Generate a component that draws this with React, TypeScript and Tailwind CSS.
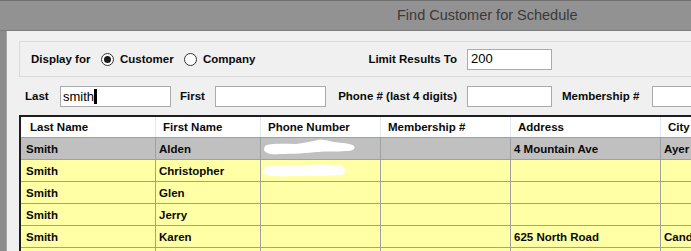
import React from 'react';

type Row = {
  last: string;
  first: string;
  phone: 0 | 1 | 2;
  membership: string;
  address: string;
  city: string;
  selected?: boolean;
};

const rows: Row[] = [
  { last: 'Smith', first: 'Alden', phone: 1, membership: '', address: '4 Mountain Ave', city: 'Ayer', selected: true },
  { last: 'Smith', first: 'Christopher', phone: 2, membership: '', address: '', city: '' },
  { last: 'Smith', first: 'Glen', phone: 0, membership: '', address: '', city: '' },
  { last: 'Smith', first: 'Jerry', phone: 0, membership: '', address: '', city: '' },
  { last: 'Smith', first: 'Karen', phone: 0, membership: '', address: '625 North Road', city: 'Cand' },
  { last: '', first: '', phone: 0, membership: '', address: '', city: '' },
];

const Radio = ({ checked }: { checked?: boolean }) => (
  <span className="w-[13px] h-[13px] rounded-full border border-[#333333] bg-white flex items-center justify-center shrink-0">
    {checked && <span className="w-[7px] h-[7px] rounded-full bg-[#1a1a1a]" />}
  </span>
);

const Redacted = ({ kind }: { kind: 1 | 2 }) =>
  kind === 1 ? (
    <svg width="96" height="20" viewBox="0 0 96 20" className="absolute left-[1px] top-0">
      <path
        d="M3 8 C8 5 22 6 34 6 C44 5 50 3 56 2 C62 1 66 3 72 4 C80 5 88 5 92 8 C94 11 90 13 84 13 C74 14 64 13 56 14 C46 15 30 16 18 16 C8 17 2 15 2 11 Z"
        fill="#ffffff"
      />
    </svg>
  ) : (
    <svg width="86" height="16" viewBox="0 0 86 16" className="absolute left-[1px] top-[3px]">
      <path
        d="M3 4 C12 2 30 2 46 2 C60 1 72 2 80 3 C84 5 84 10 80 12 C66 13 48 13 30 13 C16 14 6 13 2 11 C0 8 1 5 3 4 Z"
        fill="#ffffff"
      />
    </svg>
  );

const cols = [
  { label: 'Last Name', w: 'w-[135px]', hp: 'pl-[9px]', bp: 'pl-[5px]' },
  { label: 'First Name', w: 'w-[105px]', hp: 'pl-[7px]', bp: 'pl-[3px]' },
  { label: 'Phone Number', w: 'w-[120px]', hp: 'pl-[7px]', bp: 'pl-[3px]' },
  { label: 'Membership #', w: 'w-[130px]', hp: 'pl-[7px]', bp: 'pl-[3px]' },
  { label: 'Address', w: 'w-[150px]', hp: 'pl-[7px]', bp: 'pl-[3px]' },
  { label: 'City', w: 'w-[100px]', hp: 'pl-[7px]', bp: 'pl-[3px]' },
];

export default function App() {
  return (
    <div
      className="w-[691px] h-[251px] overflow-hidden bg-[#8c8c8c] flex flex-col text-[#0a0a0a]"
      style={{ fontFamily: '"Liberation Sans", Arial, sans-serif' }}
    >
      {/* title bar */}
      <div className="h-[31px] shrink-0 bg-[#929292] border-t border-[#6e6e6e] border-b border-b-[#7c7c7c] flex items-center pl-[397px]">
        <span className="text-[14.5px] text-[#3a3a3a] leading-none">Find Customer for Schedule</span>
      </div>

      {/* window body */}
      <div className="flex-1 ml-[6px] border-l border-[#a6a6a6] bg-[#f0f0f0] overflow-hidden flex flex-col">
        {/* display for group */}
        <div className="mt-[10px] ml-[12px] w-[720px] h-[36px] shrink-0 border border-[#dadada] flex items-center pl-[11px] text-[11.5px] font-bold">
          <span className="w-[70px] pt-[1px]">Display for</span>
          <Radio checked />
          <span className="ml-[6px] w-[64px] pt-[1px]">Customer</span>
          <Radio />
          <span className="ml-[6px] w-[80px] pt-[1px]">Company</span>
          <span className="w-[184px] text-right pr-[10px] pt-[1px]">Limit Results To</span>
          <div className="w-[85px] h-[21px] bg-white border border-[#ababab] flex items-center pl-[3px] text-[13px] font-normal text-black">
            200
          </div>
        </div>

        {/* search row */}
        <div className="mt-[9px] h-[21px] shrink-0 flex items-center pl-[18px] text-[11.5px] font-bold whitespace-nowrap">
          <span className="w-[35px] shrink-0">Last</span>
          <div className="w-[111px] h-[21px] shrink-0 bg-white border border-[#ababab] flex items-center pl-[2px] text-[13px] font-normal text-black">
            smith
            <span className="inline-block w-[3px] h-[15px] bg-black" />
          </div>
          <span className="ml-[9px] w-[35px] shrink-0">First</span>
          <div className="w-[111px] h-[21px] shrink-0 bg-white border border-[#ababab]" />
          <span className="w-[141px] shrink-0 text-right pr-[10px]">Phone # (last 4 digits)</span>
          <div className="w-[85px] h-[21px] shrink-0 bg-white border border-[#ababab]" />
          <span className="w-[100px] shrink-0 pl-[10px]">Membership #</span>
          <div className="w-[80px] h-[21px] shrink-0 bg-white border border-[#ababab]" />
        </div>

        {/* results table */}
        <div className="mt-[8px] ml-[12px] w-[760px] shrink-0 border-t-2 border-l-2 border-[#1e1e1e] text-[11.5px] font-bold">
          <div className="flex h-[21px] bg-white border-b border-[#a0a0a0]">
            {cols.map((c) => (
              <div
                key={c.label}
                className={`${c.w} ${c.hp} shrink-0 h-full flex items-center pt-[1px] border-r border-[#e2e8f0] whitespace-nowrap`}
              >
                {c.label}
              </div>
            ))}
          </div>
          {rows.map((r, i) => {
            const cells = [r.last, r.first, '', r.membership, r.address, r.city];
            return (
              <div
                key={i}
                className={`flex h-[22px] border-b border-[#a0a0a0] ${r.selected ? 'bg-[#c0c0c0]' : 'bg-[#ffffa6]'}`}
              >
                {cols.map((c, j) => (
                  <div
                    key={c.label}
                    className={`${c.w} ${c.bp} shrink-0 h-full flex items-center pt-[2px] border-r border-[#a0a0a0] whitespace-nowrap relative`}
                  >
                    {j === 2 && r.phone !== 0 ? <Redacted kind={r.phone} /> : cells[j]}
                  </div>
                ))}
              </div>
            );
          })}
        </div>
      </div>
    </div>
  );
}
